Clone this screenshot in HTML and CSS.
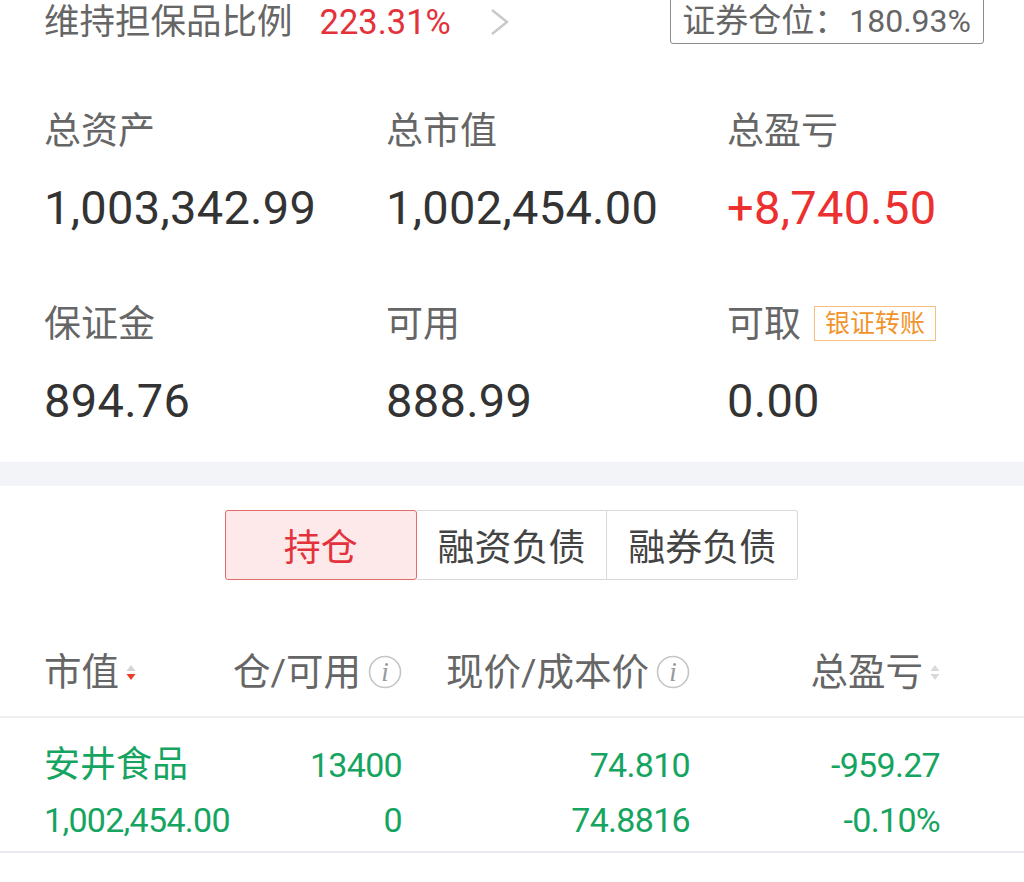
FILE: index.html
```html
<!DOCTYPE html>
<html lang="zh-CN">
<head>
<meta charset="utf-8">
<title>资产</title>
<link rel="stylesheet" href="styles.css">
</head>
<body>
<div class="page">
  <div class="topbar">
    <span class="top-label">维持担保品比例</span>
    <span class="top-value">223.31%</span>
    <svg class="chevron" width="22" height="28" viewBox="0 0 22 28"><path d="M3 2 L18 14 L3 26" fill="none" stroke="#c8c8c8" stroke-width="2.4"/></svg>
    <div class="position-box">证券仓位：<span class="pos-num">180.93%</span></div>
  </div>

  <div class="summary">
    <div class="cell">
      <div class="label">总资产</div>
      <div class="value">1,003,342.99</div>
    </div>
    <div class="cell">
      <div class="label">总市值</div>
      <div class="value">1,002,454.00</div>
    </div>
    <div class="cell">
      <div class="label">总盈亏</div>
      <div class="value red">+8,740.50</div>
    </div>
    <div class="cell">
      <div class="label">保证金</div>
      <div class="value">894.76</div>
    </div>
    <div class="cell">
      <div class="label">可用</div>
      <div class="value">888.99</div>
    </div>
    <div class="cell">
      <div class="label">可取<span class="badge">银证转账</span></div>
      <div class="value">0.00</div>
    </div>
  </div>

  <div class="band"></div>

  <div class="tabs">
    <div class="tab active">持仓</div>
    <div class="tab">融资负债</div>
    <div class="tab">融券负债</div>
  </div>

  <div class="table-head">
    <div class="th left">市值
      <svg class="sort" width="10" height="24" viewBox="0 0 10 24"><path d="M5 5 L9.5 11 L0.5 11 Z" fill="#d4d4d4"/><path d="M0.5 14 L9.5 14 L5 20 Z" fill="#ec3a24"/></svg>
    </div>
    <div class="th">仓/可用
      <svg class="info" width="34" height="34" viewBox="0 0 34 34"><circle cx="17" cy="17" r="15.5" fill="none" stroke="#c4c4c4" stroke-width="1.6"/><text x="17" y="26" text-anchor="middle" font-family="Liberation Serif, serif" font-style="italic" font-size="27" fill="#999999">i</text></svg>
    </div>
    <div class="th">现价/成本价
      <svg class="info" width="34" height="34" viewBox="0 0 34 34"><circle cx="17" cy="17" r="15.5" fill="none" stroke="#c4c4c4" stroke-width="1.6"/><text x="17" y="26" text-anchor="middle" font-family="Liberation Serif, serif" font-style="italic" font-size="27" fill="#999999">i</text></svg>
    </div>
    <div class="th">总盈亏
      <svg class="sort" width="10" height="24" viewBox="0 0 10 24"><path d="M5 5 L9.5 11 L0.5 11 Z" fill="#d9d9d9"/><path d="M0.5 14 L9.5 14 L5 20 Z" fill="#d9d9d9"/></svg>
    </div>
  </div>

  <div class="table-row">
    <div class="td left">
      <div class="name">安井食品</div>
      <div class="num">1,002,454.00</div>
    </div>
    <div class="td">
      <div class="num big">13400</div>
      <div class="num">0</div>
    </div>
    <div class="td">
      <div class="num big">74.810</div>
      <div class="num">74.8816</div>
    </div>
    <div class="td">
      <div class="num big">-959.27</div>
      <div class="num">-0.10%</div>
    </div>
  </div>
</div>
</body>
</html>
```

FILE: styles.css
```css
html, body {
  margin: 0;
  padding: 0;
  background: #ffffff;
}

body {
  font-family: Roboto, "Noto Sans CJK SC", sans-serif;
  color: #333333;
  overflow: hidden;
}

.page {
  width: 1024px;
  height: 882px;
  overflow: hidden;
}

/* Top bar */
.topbar {
  height: 44px;
  display: flex;
  align-items: center;
  padding-left: 44px;
  padding-right: 40px;
}

.top-label {
  font-size: 35.5px;
  color: #666666;
  line-height: 44px;
}

.top-value {
  font-size: 34.5px;
  color: #e3323b;
  margin-left: 27px;
  line-height: 44px;
}

.chevron {
  margin-left: 38px;
}

.position-box {
  margin-left: auto;
  margin-top: -8px;
  height: 52px;
  box-sizing: border-box;
  border: 1.5px solid #8c8c8c;
  border-radius: 3px;
  padding: 6px 12px 0 11px;
  display: flex;
  align-items: center;
  font-size: 33px;
  color: #666666;
  line-height: 44px;
}

.pos-num {
  font-size: 32px;
  margin-left: 2px;
}

/* Summary */
.summary {
  margin-top: 66px;
  padding-left: 44px;
  padding-bottom: 33px;
  display: grid;
  grid-template-columns: 342px 341px 300px;
  row-gap: 67px;
}

.cell {
  display: flex;
  flex-direction: column;
  gap: 26px;
}

.label {
  font-size: 37px;
  line-height: 44px;
  height: 44px;
  color: #666666;
  display: flex;
  align-items: center;
}

.value {
  font-size: 47px;
  line-height: 56px;
  height: 56px;
  letter-spacing: 0.3px;
  color: #333333;
}

.red {
  color: #ec2f2f;
}

.badge {
  margin-left: 13px;
  font-size: 25px;
  line-height: 33px;
  height: 35px;
  box-sizing: border-box;
  padding: 0 10px;
  border: 1px solid #f6c07c;
  color: #f1942c;
  display: inline-flex;
  align-items: center;
  margin-top: -4px;
}

/* Band */
.band {
  height: 24px;
  background: #f3f4f8;
}

/* Tabs */
.tabs {
  margin: 24px 0 0 225px;
  display: flex;
  width: 573px;
  height: 70px;
}

.tab {
  flex: 1;
  display: flex;
  align-items: center;
  justify-content: center;
  font-size: 37px;
  color: #444444;
  border: 1.5px solid #d9d9d9;
  border-left: none;
  box-sizing: border-box;
  background: #ffffff;
}

.tab:last-child {
  border-radius: 0 3px 3px 0;
}

.tab.active {
  border: 1.5px solid #e46c6c;
  border-radius: 3px;
  background: #fde9e9;
  color: #e3323b;
}

/* Table */
.table-head,
.table-row {
  display: grid;
  grid-template-columns: 186px 172px 288px 250px;
  padding-left: 44px;
}

.table-head {
  margin-top: 48px;
  height: 90px;
  border-bottom: 2px solid #efeff2;
  box-sizing: border-box;
  align-items: center;
}

.th {
  display: flex;
  align-items: center;
  justify-content: flex-end;
  font-size: 37.5px;
  color: #666666;
  line-height: 44px;
}

.th.left {
  justify-content: flex-start;
}

.sort {
  margin-left: 7px;
}

.info {
  margin-left: 7px;
}

.table-row {
  padding-top: 25px;
  padding-bottom: 9px;
  border-bottom: 2px solid #e8e8ee;
  height: 135px;
  box-sizing: border-box;
}

.td {
  display: flex;
  flex-direction: column;
  align-items: flex-end;
  gap: 11px;
  color: #16a461;
}

.td.left {
  align-items: flex-start;
}

.name {
  font-size: 36px;
  line-height: 44px;
  height: 44px;
}

.num {
  font-size: 34px;
  line-height: 44px;
  height: 44px;
  letter-spacing: -0.7px;
}
```
